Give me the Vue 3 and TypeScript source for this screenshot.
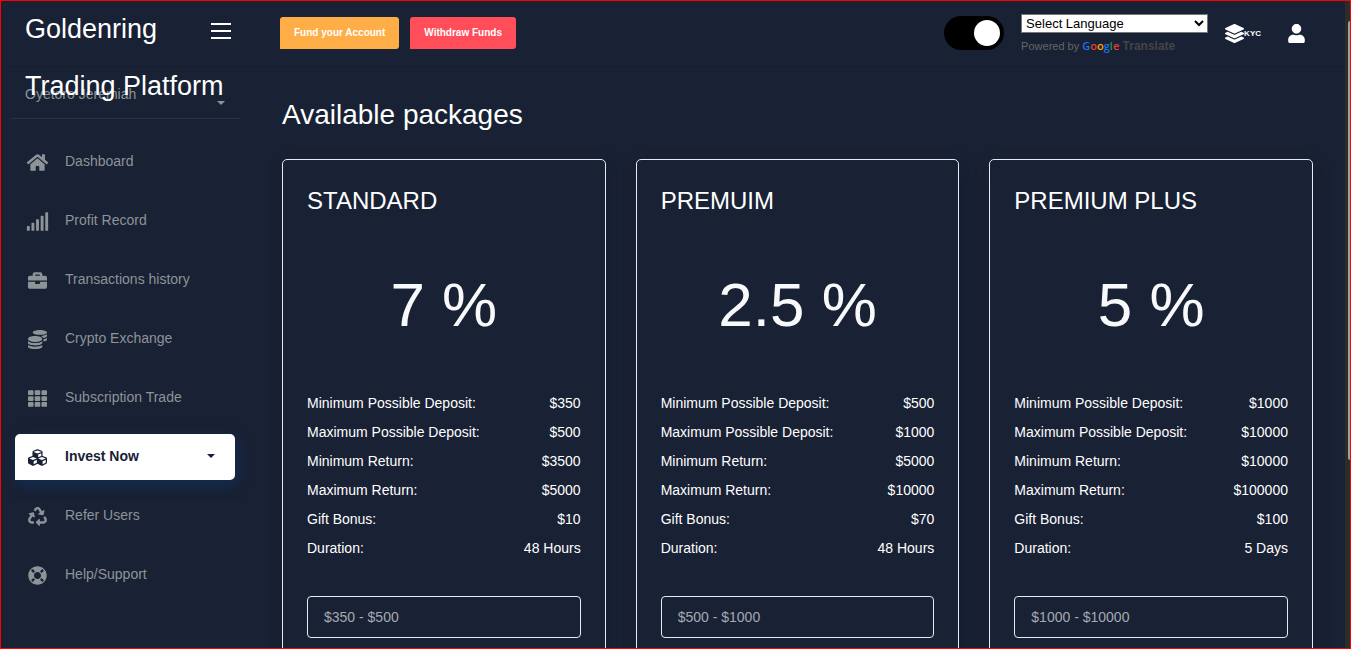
<script setup lang="ts">
import { ref } from 'vue'

interface NavItem {
  label: string
  viewBox: string
  path: string
  active?: boolean
}

interface Plan {
  name: string
  rate: string
  range: string
  rows: [string, string][]
}

const navItems: NavItem[] = [
  {
    label: 'Dashboard', viewBox: '0 0 576 512',
    path: 'M280.37 148.26L96 300.11V464a16 16 0 0 0 16 16l112.06-.29a16 16 0 0 0 15.92-16V368a16 16 0 0 1 16-16h64a16 16 0 0 1 16 16v95.64a16 16 0 0 0 16 16.05L464 480a16 16 0 0 0 16-16V300L295.67 148.26a12.19 12.19 0 0 0-15.3 0zM571.6 251.47L488 182.56V44.05a12 12 0 0 0-12-12h-56a12 12 0 0 0-12 12v72.61L318.47 43a48 48 0 0 0-61 0L4.34 251.47a12 12 0 0 0-1.6 16.9l25.5 31A12 12 0 0 0 45.15 301l235.22-193.74a12.19 12.19 0 0 1 15.3 0L530.9 301a12 12 0 0 0 16.9-1.6l25.5-31a12 12 0 0 0-1.7-16.93z'
  },
  {
    label: 'Profit Record', viewBox: '0 0 640 512',
    path: 'M216 288h-48c-8.84 0-16 7.16-16 16v192c0 8.84 7.16 16 16 16h48c8.84 0 16-7.16 16-16V304c0-8.84-7.16-16-16-16zM88 384H40c-8.84 0-16 7.16-16 16v96c0 8.84 7.16 16 16 16h48c8.84 0 16-7.16 16-16v-96c0-8.84-7.16-16-16-16zm256-192h-48c-8.84 0-16 7.16-16 16v288c0 8.84 7.16 16 16 16h48c8.84 0 16-7.16 16-16V208c0-8.84-7.16-16-16-16zm128-96h-48c-8.84 0-16 7.16-16 16v384c0 8.84 7.16 16 16 16h48c8.84 0 16-7.16 16-16V112c0-8.84-7.16-16-16-16zM600 0h-48c-8.84 0-16 7.16-16 16v480c0 8.84 7.16 16 16 16h48c8.84 0 16-7.16 16-16V16c0-8.84-7.16-16-16-16z'
  },
  {
    label: 'Transactions history', viewBox: '0 0 512 512',
    path: 'M320 336c0 8.84-7.16 16-16 16h-96c-8.84 0-16-7.16-16-16v-48H0v144c0 25.6 22.4 48 48 48h416c25.6 0 48-22.4 48-48V288H320v48zm144-208h-80V80c0-25.6-22.4-48-48-48H176c-25.6 0-48 22.4-48 48v48H48c-25.6 0-48 22.4-48 48v80h512v-80c0-25.6-22.4-48-48-48zm-144 0H192V96h128v32z'
  },
  {
    label: 'Crypto Exchange', viewBox: '0 0 512 512',
    path: 'M0 405.3V448c0 35.3 86 64 192 64s192-28.7 192-64v-42.7C342.7 434.4 267.2 448 192 448S41.3 434.4 0 405.3zM320 128c106 0 192-28.7 192-64S426 0 320 0 128 28.7 128 64s86 64 192 64zM0 300.4V352c0 35.3 86 64 192 64s192-28.7 192-64v-51.6c-41.3 34-116.9 51.6-192 51.6S41.3 334.4 0 300.4zm416 11c57.3-11.1 96-31.7 96-55.4v-42.7c-23.2 16.4-57.3 27.6-96 34.5v63.6zM192 160C86 160 0 195.8 0 240s86 80 192 80 192-35.8 192-80-86-80-192-80zm219.3 56.3c60-10.8 100.7-32 100.7-56.3v-42.7c-35.5 25.1-96.5 38.6-160.7 41.8 29.5 14.3 51.2 33.5 60 57.2z'
  },
  {
    label: 'Subscription Trade', viewBox: '0 0 512 512',
    path: 'M149.333 56v80c0 13.255-10.745 24-24 24H24c-13.255 0-24-10.745-24-24V56c0-13.255 10.745-24 24-24h101.333c13.255 0 24 10.745 24 24zm181.334 240v-80c0-13.255-10.745-24-24-24H205.333c-13.255 0-24 10.745-24 24v80c0 13.255 10.745 24 24 24h101.333c13.256 0 24.001-10.745 24.001-24zm32-240v80c0 13.255 10.745 24 24 24H488c13.255 0 24-10.745 24-24V56c0-13.255-10.745-24-24-24H386.667c-13.255 0-24 10.745-24 24zm-32 80V56c0-13.255-10.745-24-24-24H205.333c-13.255 0-24 10.745-24 24v80c0 13.255 10.745 24 24 24h101.333c13.256 0 24.001-10.745 24.001-24zm-205.334 56H24c-13.255 0-24 10.745-24 24v80c0 13.255 10.745 24 24 24h101.333c13.255 0 24-10.745 24-24v-80c0-13.255-10.745-24-24-24zM0 376v80c0 13.255 10.745 24 24 24h101.333c13.255 0 24-10.745 24-24v-80c0-13.255-10.745-24-24-24H24c-13.255 0-24 10.745-24 24zm386.667-56H488c13.255 0 24-10.745 24-24v-80c0-13.255-10.745-24-24-24H386.667c-13.255 0-24 10.745-24 24v80c0 13.255 10.745 24 24 24zm0 160H488c13.255 0 24-10.745 24-24v-80c0-13.255-10.745-24-24-24H386.667c-13.255 0-24 10.745-24 24v80c0 13.255 10.745 24 24 24zM181.333 376v80c0 13.255 10.745 24 24 24h101.333c13.255 0 24-10.745 24-24v-80c0-13.255-10.745-24-24-24H205.333c-13.255 0-24 10.745-24 24z'
  },
  {
    label: 'Invest Now', viewBox: '0 0 512 512', active: true,
    path: 'M488.6 250.2L392 214V105.500c0-15-9.300-28.400-23.400-33.700l-100-37.500c-8.100-3.100-17.100-3.100-25.300 0l-100 37.500c-14.100 5.300-23.400 18.700-23.400 33.700V214l-96.600 36.200C9.300 255.500 0 268.900 0 283.900V394c0 13.600 7.700 26.100 19.900 32.200l100 50c10.100 5.100 22.100 5.100 32.200 0l103.900-52 103.900 52c10.100 5.100 22.100 5.100 32.200 0l100-50c12.200-6.100 19.900-18.600 19.900-32.200V283.900c0-15-9.300-28.400-23.400-33.700zM358 214.800l-85 31.900v-68.200l85-37v73.300zM154 104.100l102-38.200 102 38.200v.6l-102 41.400-102-41.400v-.6zm84 291.100l-85 42.500v-79.100l85-38.800v75.400zm0-112l-102 41.400-102-41.400v-.6l102-38.200 102 38.200v.6zm240 112l-85 42.500v-79.100l85-38.800v75.400zm0-112l-102 41.400-102-41.400v-.6l102-38.200 102 38.200v.6z'
  },
  {
    label: 'Refer Users', viewBox: '0 0 512 512',
    path: 'M184.561 261.903c3.232 13.997-12.123 24.635-24.068 17.168l-40.736-25.455-50.867 81.402C55.606 356.273 70.960 384 96.012 384H148c6.627 0 12 5.373 12 12v40c0 6.627-5.373 12-12 12H96.115c-75.334 0-121.302-83.048-81.408-146.880l50.822-81.388-40.725-25.448c-12.081-7.547-8.966-25.961 4.879-29.158l110.237-25.450c8.611-1.988 17.201 3.381 19.189 11.990l25.452 110.237zm98.561-182.915l41.289 66.076-40.740 25.457c-12.051 7.528-9 25.953 4.879 29.158l110.237 25.450c8.672 1.999 17.215-3.438 19.189-11.990l25.450-110.237c3.197-13.844-11.990-24.719-24.068-17.168l-40.687 25.424-41.263-66.082c-37.521-60.033-125.209-60.171-162.816 0l-17.963 28.766c-3.510 5.620-1.800 13.021 3.820 16.533l33.919 21.195c5.620 3.512 13.024 1.803 16.536-3.817l17.961-28.743c12.712-20.341 41.973-19.676 54.257-.022zM497.288 301.120l-27.515-44.065c-3.511-5.623-10.916-7.334-16.538-3.821l-33.861 21.159c-5.620 3.512-7.330 10.915-3.818 16.536l27.564 44.112c13.257 21.211-2.057 48.960-27.136 48.960H320V336.020c0-14.213-17.242-21.383-27.313-11.313l-80 79.981c-6.249 6.248-6.249 16.379 0 22.627l80 79.989C302.689 517.308 320 510.300 320 495.989V448h95.880c75.274 0 121.335-82.997 81.408-146.880z'
  },
  {
    label: 'Help/Support', viewBox: '0 0 512 512',
    path: 'M256 8C119.033 8 8 119.033 8 256s111.033 248 248 248 248-111.033 248-248S392.967 8 256 8zm173.696 119.559l-63.399 63.399c-10.987-18.559-26.670-34.252-45.255-45.255l63.399-63.399a218.396 218.396 0 0 1 45.255 45.255zM256 352c-53.019 0-96-42.981-96-96s42.981-96 96-96 96 42.981 96 96-42.981 96-96 96zM127.559 82.304l63.399 63.399c-18.559 10.987-34.252 26.670-45.255 45.255l-63.399-63.399a218.372 218.372 0 0 1 45.255-45.255zM82.304 384.441l63.399-63.399c10.987 18.559 26.670 34.252 45.255 45.255l-63.399 63.399a218.396 218.396 0 0 1-45.255-45.255zm302.137 45.255l-63.399-63.399c18.559-10.987 34.252-26.670 45.255-45.255l63.399 63.399a218.403 218.403 0 0 1-45.255 45.255z'
  }
]

const plans: Plan[] = [
  {
    name: 'STANDARD', rate: '7 %', range: '$350 - $500',
    rows: [
      ['Minimum Possible Deposit:', '$350'], ['Maximum Possible Deposit:', '$500'],
      ['Minimum Return:', '$3500'], ['Maximum Return:', '$5000'],
      ['Gift Bonus:', '$10'], ['Duration:', '48 Hours']
    ]
  },
  {
    name: 'PREMUIM', rate: '2.5 %', range: '$500 - $1000',
    rows: [
      ['Minimum Possible Deposit:', '$500'], ['Maximum Possible Deposit:', '$1000'],
      ['Minimum Return:', '$5000'], ['Maximum Return:', '$10000'],
      ['Gift Bonus:', '$70'], ['Duration:', '48 Hours']
    ]
  },
  {
    name: 'PREMIUM PLUS', rate: '5 %', range: '$1000 - $10000',
    rows: [
      ['Minimum Possible Deposit:', '$1000'], ['Maximum Possible Deposit:', '$10000'],
      ['Minimum Return:', '$10000'], ['Maximum Return:', '$100000'],
      ['Gift Bonus:', '$100'], ['Duration:', '5 Days']
    ]
  }
]

const amounts = ref<string[]>(plans.map(() => ''))
const darkMode = ref(true)
const language = ref('')
</script>

<template>
  <div class="frame">
    <div class="page">
      <header class="topbar">
        <div class="brand">
          <a class="logo" href="#">Goldenring<br>Trading Platform</a>
          <button class="burger" type="button" aria-label="Toggle menu">
            <span></span><span></span><span></span>
          </button>
        </div>
        <nav class="tools" aria-label="Account">
          <a class="btn fund" href="#">Fund your Account</a>
          <a class="btn withdraw" href="#">Withdraw Funds</a>
          <input v-model="darkMode" class="switch" type="checkbox" aria-label="Dark mode">
          <div class="translate">
            <select v-model="language" aria-label="Language">
              <option value="">Select Language</option>
            </select>
            <div class="powered">
              Powered by
              <a href="#"><span class="google"><i class="b">G</i><i class="r">o</i><i class="y">o</i><i class="b">g</i><i class="g">l</i><i class="r">e</i></span> Translate</a>
            </div>
          </div>
          <a class="kyc" href="#">
            <svg viewBox="0 0 512 512" aria-hidden="true"><path d="M12.410 148.020l232.940 105.670c6.800 3.090 14.490 3.090 21.290 0l232.940-105.670c16.550-7.510 16.550-32.520 0-40.030L266.650 2.310a25.607 25.607 0 0 0-21.290 0L12.410 107.980c-16.550 7.510-16.550 32.530 0 40.040zm487.180 88.280l-58.090-26.330-161.640 73.270c-7.560 3.430-15.590 5.170-23.860 5.170s-16.290-1.740-23.860-5.170L70.510 209.970l-58.100 26.330c-16.550 7.500-16.550 32.500 0 40l232.940 105.590c6.800 3.080 14.490 3.080 21.290 0L499.590 276.300c16.550-7.500 16.550-32.500 0-40zm0 127.800l-57.870-26.230-161.860 73.370c-7.560 3.430-15.590 5.170-23.860 5.170s-16.290-1.740-23.860-5.170L70.290 337.870 12.410 364.100c-16.550 7.500-16.550 32.500 0 40l232.940 105.590c6.800 3.080 14.490 3.080 21.290 0L499.590 404.100c16.550-7.500 16.550-32.500 0-40z" /></svg>
            <span>KYC</span>
          </a>
          <a class="profile" href="#" aria-label="Profile">
            <svg viewBox="0 0 448 512" aria-hidden="true"><path d="M224 256c70.700 0 128-57.300 128-128S294.700 0 224 0 96 57.300 96 128s57.300 128 128 128zm89.600 32h-16.700c-22.200 10.200-46.900 16-72.900 16s-50.600-5.800-72.900-16h-16.700C60.200 288 0 348.200 0 422.400V464c0 26.500 21.500 48 48 48h352c26.500 0 48-21.500 48-48v-41.600c0-74.200-60.200-134.400-134.400-134.400z" /></svg>
          </a>
        </nav>
      </header>

      <div class="body">
        <aside class="sidebar">
          <a class="user" href="#"><span>Oyetoro Jeremiah</span><b class="caret"></b></a>
          <nav aria-label="Main">
            <ul class="menu">
              <li v-for="item in navItems" :key="item.label">
                <a href="#" :class="{ active: item.active }">
                  <svg :viewBox="item.viewBox" aria-hidden="true"><path :d="item.path" fill-rule="evenodd" /></svg>
                  <span>{{ item.label }}</span>
                  <b v-if="item.active" class="caret"></b>
                </a>
              </li>
            </ul>
          </nav>
        </aside>

        <main class="content">
          <h1>Available packages</h1>
          <div class="plans">
            <section v-for="(plan, i) in plans" :key="plan.name" class="plan">
              <h2>{{ plan.name }}</h2>
              <p class="rate">{{ plan.rate }}</p>
              <dl>
                <div v-for="row in plan.rows" :key="row[0]">
                  <dt>{{ row[0] }}</dt>
                  <dd>{{ row[1] }}</dd>
                </div>
              </dl>
              <input v-model="amounts[i]" type="text" :placeholder="plan.range" :aria-label="'Amount for ' + plan.name">
            </section>
          </div>
        </main>
      </div>
    </div>
    <div class="scrollbar" aria-hidden="true"><div class="thumb"></div></div>
  </div>
</template>

<style>
body {
  background: #192134;
}
</style>

<style scoped>
* {
  box-sizing: border-box;
}

.frame {
  display: flex;
  height: 100vh;
  overflow: hidden;
  border: 1px solid #ff0000;
  background: #192134;
  color: #fff;
  font: 14px/20px "Liberation Sans", Arial, sans-serif;
}

.page {
  display: flex;
  flex: 1;
  flex-direction: column;
  min-width: 0;
}

a {
  color: inherit;
  text-decoration: none;
}

.topbar {
  display: flex;
  flex: none;
  height: 66px;
  border-bottom: 1px solid #171e30;
}

.brand {
  display: flex;
  flex: none;
  justify-content: space-between;
  width: 250px;
  padding: 0 20px 0 24px;
}

.logo {
  position: relative;
  z-index: 1;
  flex: none;
  width: 186px;
  white-space: nowrap;
  font-size: 27px;
  line-height: 57px;
}

.burger {
  display: flex;
  flex-direction: column;
  justify-content: space-between;
  width: 20px;
  height: 16px;
  margin-top: 22px;
  padding: 0;
  border: 0;
  background: none;
}

.burger span {
  height: 2px;
  background: #fff;
}

.tools {
  display: flex;
  flex: 1;
  align-items: center;
  padding: 0 40px 2px 29px;
}

.btn {
  border-radius: 3px;
  padding: 0 14px;
  font-size: 10px;
  font-weight: 700;
  line-height: 32px;
}

.fund {
  margin-right: 11px;
  border-bottom-left-radius: 0;
  background: #ffad46;
}

.withdraw {
  border-bottom-left-radius: 0;
  background: #ff4d5a;
}

.switch {
  display: flex;
  align-items: center;
  justify-content: flex-end;
  width: 60px;
  height: 34px;
  margin: 0 17px 0 auto;
  padding-right: 4px;
  border-radius: 17px;
  appearance: none;
  background: #000;
}

.switch::before {
  width: 26px;
  height: 26px;
  border-radius: 50%;
  background: #fff;
  content: "";
}

.switch:not(:checked) {
  justify-content: flex-start;
  padding-left: 4px;
}

.translate {
  width: 187px;
  padding-top: 8px;
}

.translate select {
  display: block;
  width: 100%;
  height: 19px;
  border: 1px solid #767676;
  background: #fff;
  color: #000;
  font: 13px "Liberation Sans", Arial, sans-serif;
}

.powered {
  color: #666;
  font-size: 11px;
  line-height: 25px;
  white-space: nowrap;
}

.powered a {
  color: #444;
  font-size: 12px;
  font-weight: 700;
}

.google {
  font-family: "Open Sans", sans-serif;
  font-weight: 600;
  font-size: 11px;
}

.google i {
  font-style: normal;
}

.b { color: #1a73e8; }
.r { color: #ea3c30; }
.y { color: #f9ab00; }
.g { color: #1e9e4a; }

.kyc {
  display: flex;
  align-items: center;
  margin-left: 17px;
  padding-top: 2px;
  font-size: 8px;
  font-weight: 700;
}

.kyc svg {
  width: 19px;
  height: 19px;
  fill: #fff;
}

.profile {
  margin-left: 27px;
  padding-top: 2px;
}

.profile svg {
  display: block;
  width: 17px;
  height: 19px;
  fill: #fff;
}

.body {
  display: flex;
  flex: 1;
  min-height: 0;
}

.sidebar {
  flex: none;
  width: 250px;
  border-right: 1px solid #1b2337;
}

.user {
  display: flex;
  justify-content: space-between;
  height: 52px;
  margin: 0 10px;
  padding: 17px 15px 0 14px;
  border-bottom: 1px solid #293145;
  color: #8d9498;
}

.caret {
  width: 0;
  height: 0;
  border: 4px solid transparent;
  border-top-color: currentColor;
  border-bottom: 0;
}

.user .caret {
  margin-top: 17px;
}

.menu {
  display: flex;
  flex-direction: column;
  gap: 13px;
  margin: 0;
  padding: 20px 15px 0 14px;
  list-style: none;
}

.menu a {
  display: flex;
  align-items: center;
  height: 46px;
  padding: 0 20px 2px 11px;
  border-radius: 5px;
  color: #8d9498;
}

.menu .active {
  background: #fff;
  color: #1a2035;
  font-weight: 700;
  border-bottom-left-radius: 0;
  box-shadow: 2px 4px 14px rgba(10, 60, 120, 0.5);
}

.menu svg {
  flex: none;
  width: 23px;
  height: 19px;
  margin: 2px 16px 0 0;
  fill: currentColor;
}

.menu a span {
  flex: 1;
}

.content {
  flex: 1;
  min-width: 0;
  padding: 30px 32px 0 31px;
}

h1 {
  margin: 0 0 27px;
  font-size: 28px;
  font-weight: 400;
  line-height: 35px;
}

.plans {
  display: grid;
  grid-template-columns: repeat(3, minmax(0, 1fr));
  gap: 30px;
}

.plan {
  padding: 24px 24px 40px;
  border: 1px solid #e6ebf3;
  border-radius: 5px;
  box-shadow: 2px 6px 15px rgba(18, 23, 40, 0.4);
}

h2 {
  margin: 0;
  font-size: 24px;
  font-weight: 400;
  line-height: 34px;
}

.rate {
  margin: 41px 0 38px;
  color: #f8f9fa;
  font-size: 62px;
  line-height: 92px;
  text-align: center;
}

dl {
  margin: 0 0 33px;
}

dl div {
  display: flex;
  justify-content: space-between;
  line-height: 29px;
}

dd {
  margin: 0;
}

.plan input {
  display: block;
  width: 100%;
  height: 42px;
  padding: 0 16px;
  border: 1px solid #e6ebf3;
  border-radius: 4px;
  background: transparent;
  color: #fff;
  font: 14px "Liberation Sans", Arial, sans-serif;
}

.plan input::placeholder {
  color: #a5a9b2;
}

.scrollbar {
  flex: none;
  width: 5px;
  padding: 20px 0 0 3px;
  background: #2c2c2c;
}

.thumb {
  height: 70%;
  border-radius: 3px 0 0 3px;
  background: #9f9f9f;
}
</style>
